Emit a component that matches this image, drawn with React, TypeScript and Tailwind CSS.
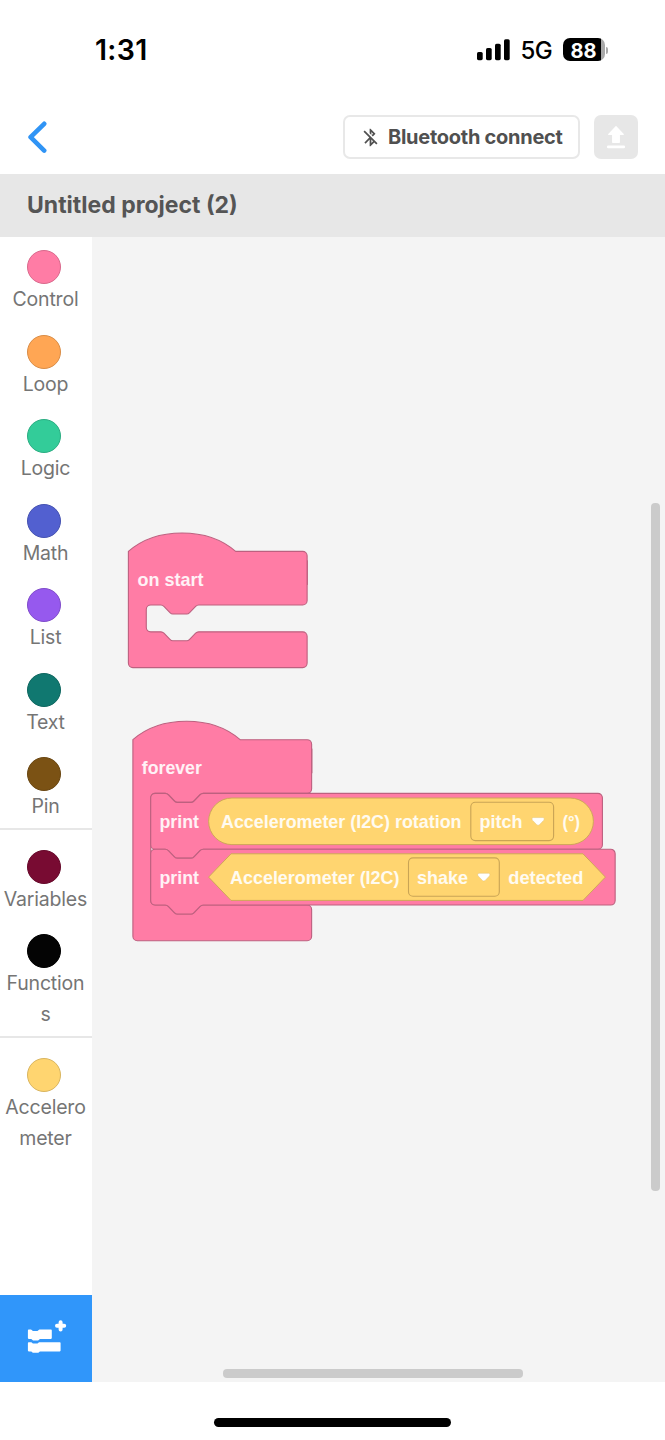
import { MdBluetoothDisabled } from "react-icons/md";

type Category = { label: string; color: string };

const groups: { items: Category[]; className: string }[] = [
  {
    className: "pt-[13px] pb-[7px]",
    items: [
      { label: "Control", color: "bg-[#ff7ca5] border-[#d9698c]" },
      { label: "Loop", color: "bg-[#ffa654] border-[#d98d47]" },
      { label: "Logic", color: "bg-[#33cc99] border-[#2bad82]" },
      { label: "Math", color: "bg-[#5260d0] border-[#4552b1]" },
      { label: "List", color: "bg-[#9659ee] border-[#804cca]" },
      { label: "Text", color: "bg-[#107870] border-[#0e665f]" },
      { label: "Pin", color: "bg-[#7b5214] border-[#694611]" },
    ],
  },
  {
    className: "-mt-px pt-5 pb-[7px] border-t-2 border-[#e7e7e7]",
    items: [
      { label: "Variables", color: "bg-[#780b32] border-[#66092a]" },
      { label: "Functions", color: "bg-[#040404] border-black" },
    ],
  },
  {
    className: "pt-5 border-t-2 border-[#e7e7e7]",
    items: [{ label: "Accelerometer", color: "bg-[#ffd570] border-[#d9b55f]" }],
  },
];

const SCALE = 1.117;
const NOTCH_RIGHT =
  "h1 c1.2,0 2,.4 2.8,1.2 l5.4,5.6 c.8,.8 1.4,1.2 2.6,1.2 h12.4 c1.2,0 1.8,-.4 2.6,-1.2 l5.4,-5.6 c.8,-.8 1.6,-1.2 2.8,-1.2 h1";
const NOTCH_LEFT =
  "h-1 c-1.2,0 -2,.4 -2.8,1.2 l-5.4,5.6 c-.8,.8 -1.4,1.2 -2.6,1.2 h-12.4 c-1.2,0 -1.8,-.4 -2.6,-1.2 l-5.4,-5.6 c-.8,-.8 -1.6,-1.2 -2.8,-1.2 h-1";
const pink = { fill: "#ff7ca5", stroke: "#bd607f" };
const yellow = { fill: "#ffd570", stroke: "#cfa65a" };

function HatBlock({ x, y, inner }: { x: number; y: number; inner: number }) {
  const d =
    `M0,0 c25,-22 71,-22 96,0 H156 a4,4 0 0 1 4,4 V44 a4,4 0 0 1 -4,4 ` +
    `H64 ${NOTCH_LEFT} H20 a4,4 0 0 0 -4,4 v${inner - 8} a4,4 0 0 0 4,4 H28 ${NOTCH_RIGHT} ` +
    `H156 a4,4 0 0 1 4,4 v24 a4,4 0 0 1 -4,4 H4 a4,4 0 0 1 -4,-4 z`;
  return (
    <g transform={`translate(${x} ${y}) scale(${SCALE})`} {...pink}>
      <path d={d} />
      <path d="M160.3,8 V30" fill="none" strokeWidth="0.8" />
    </g>
  );
}

function StackBlock({ x, y, width }: { x: number; y: number; width: number }) {
  const d =
    `M0,4 a4,4 0 0 1 4,-4 H12 ${NOTCH_RIGHT} H${width - 4} a4,4 0 0 1 4,4 v42 a4,4 0 0 1 -4,4 ` +
    `H48 ${NOTCH_LEFT} H4 a4,4 0 0 1 -4,-4 z`;
  return (
    <g transform={`translate(${x} ${y}) scale(${SCALE})`} {...pink}>
      <path d={d} />
    </g>
  );
}

function Label({ x, y, w, children }: { x: number; y: number; w: number; children: string }) {
  return (
    <text x={x} y={y} textLength={w} lengthAdjust="spacingAndGlyphs" className="fill-white/90 text-[18.2px] font-bold">
      {children}
    </text>
  );
}

function Dropdown({ x, y, w }: { x: number; y: number; w: number }) {
  const ax = x + w - 21.8;
  const ay = y + 15.4;
  return (
    <g>
      <rect x={x} y={y} width={w} height="38.4" rx="4.5" fill="#ffd570" stroke="#c9a455" strokeWidth="1.1" />
      <path
        d={`M${ax + 1.4},${ay} h9.8 q2.2,0.6 0.8,2.6 l-4.3,4.5 q-1.4,1.2 -2.8,0 l-4.3,-4.5 q-1.4,-2 0.8,-2.6 z`}
        fill="#fff"
        stroke="#d9b55f"
        strokeWidth="0.4"
      />
    </g>
  );
}

function Workspace() {
  return (
    <svg viewBox="92 237 573 1145" className="block h-[1145px] w-[573px] font-['Liberation_Sans',sans-serif]">
      <HatBlock x={128.4} y={551.4} inner={24} />
      <Label x={137.5} y={585.6} w={66}>on start</Label>

      <HatBlock x={132.9} y={739.7} inner={100} />
      <Label x={141.8} y={774} w={60}>forever</Label>

      <StackBlock x={150.7} y={793.4} width={404.4} />
      <StackBlock x={150.7} y={849.2} width={415.8} />

      <rect x="208.6" y="798" width="384.8" height="46.6" rx="23.3" {...yellow} />
      <path d="M231,853.8 H583 L605.4,877.1 L583,900.4 H231 L208.6,877.1 z" {...yellow} />

      <Label x={159.5} y={828.4} w={39.5}>print</Label>
      <Label x={221} y={828.4} w={240.5}>Accelerometer (I2C) rotation</Label>
      <Dropdown x={470.8} y={802.2} w={82.8} />
      <Label x={479.5} y={828.4} w={43}>pitch</Label>
      <Label x={562.5} y={828.4} w={17.5}>(°)</Label>

      <Label x={159.5} y={884.3} w={39.5}>print</Label>
      <Label x={230} y={884.3} w={169.5}>Accelerometer (I2C)</Label>
      <Dropdown x={408.5} y={857.9} w={90.8} />
      <Label x={417} y={884.3} w={51}>shake</Label>
      <Label x={508.3} y={884.3} w={75}>detected</Label>
    </svg>
  );
}

function StatusBar() {
  return (
    <div className="flex h-[100px] items-center justify-between pr-[57px] pl-[95px] text-black">
      <span className="text-[28.5px] leading-[34px] font-semibold tracking-[0.3px]">1:31</span>
      <div className="flex h-[24px] items-center">
        <svg viewBox="0 0 33 22" className="h-[22px] w-[33px]">
          <rect x="0" y="13" width="5.7" height="8.2" rx="1.6" />
          <rect x="9" y="9" width="5.7" height="12.2" rx="1.6" />
          <rect x="18" y="4.7" width="5.7" height="16.5" rx="1.6" />
          <rect x="27" y="0.2" width="5.7" height="21" rx="1.6" />
        </svg>
        <span className="mt-px ml-[11px] w-[42px] text-[24px] leading-6 font-medium tracking-[-0.5px]">5G</span>
        <div className="-mt-px flex h-[23px] w-[42px] items-center justify-center rounded-[7px] bg-[linear-gradient(to_right,#000_38px,#a9a9a9_38px)] pt-[2px] text-[20px] leading-none font-bold text-white">
          88
        </div>
        <div className="ml-px h-[7px] w-[2.5px] rounded-r-full bg-[#a9a9a9]" />
      </div>
    </div>
  );
}

function Toolbar() {
  return (
    <div className="flex h-[74px] items-start justify-between pr-[27px] pl-[27px]">
      <button className="pt-[20px]">
        <svg viewBox="0 0 20 34" className="h-[34px] w-5" fill="none" stroke="#3094f5" strokeWidth="4.6" strokeLinecap="round" strokeLinejoin="round">
          <path d="M17.2,3.8 L3.6,17.2 L17.2,30.6" />
        </svg>
      </button>
      <div className="flex gap-[14px] pt-[15px]">
        <button className="flex h-[44px] w-[237px] items-center rounded-[7px] border-2 border-[#e8e8e8] pl-[15px] text-[20px] font-bold tracking-[-0.27px] text-[#505050]">
          <MdBluetoothDisabled className="mr-[7px] size-[21px]" />
          <span className="whitespace-nowrap">Bluetooth connect</span>
        </button>
        <button className="flex size-[44px] items-center justify-center rounded-[7px] bg-[#e7e7e7]">
          <svg viewBox="0 0 20 24" className="h-6 w-5" fill="#fff" stroke="#fff" strokeLinejoin="round" strokeLinecap="round">
            <path d="M10,1.6 L17.3,9.4 H13.3 V17.3 H6.7 V9.4 H2.7 z" strokeWidth="1.2" />
            <path d="M2.3,21.9 H17.7" strokeWidth="2.8" />
          </svg>
        </button>
      </div>
    </div>
  );
}

function Sidebar() {
  return (
    <nav className="flex w-[92px] shrink-0 flex-col bg-white">
      {groups.map((group, i) => (
        <div key={i} className={`flex flex-col gap-5 ${group.className}`}>
          {group.items.map((item) => (
            <div key={item.label} className="flex flex-col items-start">
              <div className={`ml-[27px] size-[34px] rounded-full border-[1.5px] ${item.color}`} />
              <span className="w-[91px] px-[3px] text-center text-[19.5px] leading-[30.5px] tracking-[-0.2px] break-all text-[#757575]">
                {item.label}
              </span>
            </div>
          ))}
        </div>
      ))}
      <button className="mt-auto flex h-[87.5px] items-center justify-center bg-[#3096fa]">
        <svg viewBox="0 0 42 36" className="h-9 w-[42px]" fill="#fff" stroke="#fff" strokeLinejoin="round">
          <path d="M3.7,10.4 H5.9 L7.7,11.8 H12.7 L14.5,10.4 H26 V18.1 H14.7 L12.9,19.7 H8.3 L6.5,18.1 H3.7 z" strokeWidth="1.6" />
          <path d="M3.7,23 H5.9 L7.7,24.4 H12.7 L14.5,23 H34.8 V30.6 H14.7 L12.9,32 H8.3 L6.5,30.6 H3.7 z" strokeWidth="1.6" />
          <path d="M35.6,2.2 V9.4 M32,5.8 H39.2" strokeWidth="4" strokeLinecap="round" />
        </svg>
      </button>
    </nav>
  );
}

export default function App() {
  return (
    <div className="flex h-[1440px] w-[665px] flex-col overflow-hidden bg-white font-[Inter,sans-serif]">
      <StatusBar />
      <Toolbar />
      <h1 className="flex h-[63px] shrink-0 items-center bg-[#e7e7e7] pb-px pl-[27px] text-[23px] font-bold text-[#555]">
        Untitled project (2)
      </h1>
      <div className="flex h-[1145px] shrink-0">
        <Sidebar />
        <main className="relative w-[573px] overflow-hidden bg-[#f4f4f4]">
          <Workspace />
          <div className="absolute top-[266px] right-[5px] h-[688px] w-[9px] rounded-[4px] bg-[#cbcbcb]" />
          <div className="absolute bottom-[4.5px] left-[131px] h-[9px] w-[300px] rounded-[4px] bg-[#cbcbcb]" />
        </main>
      </div>
      <div className="flex h-[58px] justify-center pt-[35.5px]">
        <div className="h-[9px] w-[237px] rounded-full bg-black" />
      </div>
    </div>
  );
}
